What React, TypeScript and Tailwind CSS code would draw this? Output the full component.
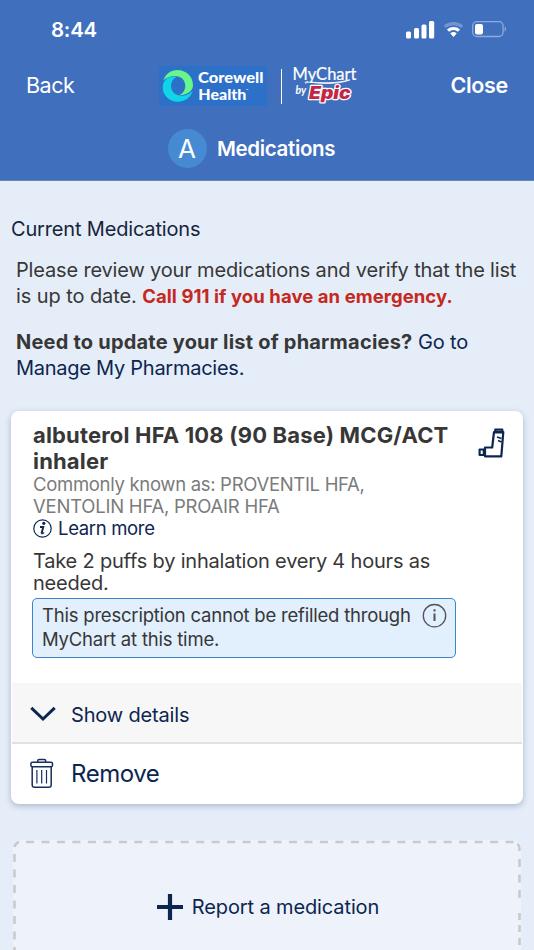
import React from "react";

function StatusIcons() {
  return (
    <svg width="102" height="20" viewBox="405 20 102 20" fill="#fff">
      <rect x="406" y="31.5" width="5" height="7" rx="1.5" />
      <rect x="414" y="28" width="5" height="10.5" rx="1.5" />
      <rect x="421.5" y="24.5" width="5" height="14" rx="1.5" />
      <rect x="429" y="21" width="5.2" height="17.5" rx="1.5" />
      <path d="M444.8 26.8a13.2 13.2 0 0 1 17.4 0" fill="none" stroke="#7496d0" strokeWidth="3.2" />
      <path d="M448 30.6a8.3 8.3 0 0 1 11 0" fill="none" stroke="#fff" strokeWidth="3.2" />
      <path d="M450.3 33.5a4.8 4.8 0 0 1 6.4 0L453.5 37z" />
      <rect x="472.7" y="21.7" width="30.4" height="14.8" rx="4.2" fill="none" stroke="#8eaadb" strokeWidth="1.3" />
      <rect x="475" y="24" width="8" height="10.5" rx="2" />
      <path d="M504.6 26.6c1.9.6 1.9 4.6 0 5.2z" fill="#8eaadb" />
    </svg>
  );
}

function CorewellLogo() {
  return (
    <svg width="108" height="40" viewBox="159 66 108 40">
      <rect x="159" y="66" width="108" height="40" fill="#2c70c8" />
      <path d="M163.3 80.5C165.500 74 171 70 177.500 70c8.500 0 15.500 6.500 15.500 15 0 5.500-4.500 10-14 10.300 4-1.700 6.300-5.400 6.300-9.300 0-6.500-4.800-10-10.300-10-5 0-8.500 1.500-11.700 4.500z" fill="#67f58c" />
      <path d="M177 76.800c-4 1.700-6 5-6 9 0 6.500 5 10 10.500 10 4.500 0 8-1.500 11.200-5-2 7-8 11-15 11-8.500 0-15-6.500-15-14.500 0-7 6-12.500 14.300-10.500z" fill="#0fd5e6" />
      <g fill="#fff" fontFamily="Lato, Inter, sans-serif" fontWeight="900" fontSize="15.5">
        <text x="198" y="83.300" textLength="65.500" lengthAdjust="spacingAndGlyphs">Corewell</text>
        <text x="198.300" y="100.200" textLength="48" lengthAdjust="spacingAndGlyphs">Health</text>
        <text x="246" y="91" fontSize="3">™</text>
      </g>
    </svg>
  );
}

function MyChartLogo() {
  return (
    <svg width="68" height="42" viewBox="291 64 68 42">
      <text x="292.500" y="80.300" fill="#fff" stroke="#fff" strokeWidth=".2" fontFamily="Lato, sans-serif" fontSize="17.500" textLength="64" lengthAdjust="spacingAndGlyphs">MyChart</text>
      <path d="M308 81.500c-4 .5-4.500 2.500 1 .6 12 .8 28 1.500 41-2.300-10 4-25 4.600-39 2.400" fill="none" stroke="#fff" strokeWidth=".9" />
      <text x="295.500" y="94.300" fill="#fff" fontFamily="Lato, sans-serif" fontSize="10.500" fontWeight="700" fontStyle="italic">by</text>
      <text x="309" y="99.300" fill="#c32748" stroke="#fff" strokeWidth="2.400" strokeLinejoin="round" paintOrder="stroke" fontFamily="Inter, sans-serif" fontSize="17" fontWeight="900" fontStyle="italic" textLength="41.500" lengthAdjust="spacingAndGlyphs">Epic</text>
    </svg>
  );
}

function InhalerIcon() {
  return (
    <svg width="27" height="31" viewBox="478 428 27 31" fill="none" stroke="#0c2650" strokeWidth="2.200">
      <path d="M494 432h9.300l-2 24.300h-16.300v-8.800h7.200z" strokeLinejoin="round" />
      <path d="M495.300 429.600h7v2.800h-7zM479.600 449.500h4.200v5.500h-4.200z" strokeLinejoin="round" />
      <path d="M497 437l4.500 1.500M498 440.500l3.500 1.500" strokeWidth="1.600" />
    </svg>
  );
}

function LearnIcon() {
  return (
    <svg width="19" height="19" viewBox="0 0 19 19">
      <circle cx="9.500" cy="9.500" r="8.700" fill="none" stroke="#0c2650" strokeWidth="1.200" />
      <circle cx="10.800" cy="4.300" r="1.600" fill="#0c2650" />
      <path d="M7 8h3.300l-1.700 6.200" fill="none" stroke="#0c2650" strokeWidth="1.900" />
      <path d="M8 14.300c.8.900 2 .4 3.200-.8" fill="none" stroke="#0c2650" strokeWidth="1.100" />
    </svg>
  );
}

function TrashIcon() {
  return (
    <svg width="24" height="31" viewBox="30 758 24 31" fill="none" stroke="#17305a" strokeWidth="1.500">
      <rect x="30.900" y="762.300" width="21.600" height="4.500" rx="1.500" />
      <path d="M37.700 762v-1q0-1.500 1.500-1.500h5q1.500 0 1.500 1.500v1M32.200 767v18q0 2.300 2.300 2.300h14.400q2.300 0 2.300-2.300v-18" />
      <path d="M36.900 770v13.500M41.700 770v13.500M46.500 770v13.500" strokeWidth="1.200" />
    </svg>
  );
}

export default function App() {
  return (
    <div className="h-[950px] w-[534px] overflow-hidden bg-[#e5edf8] font-['Inter',sans-serif] text-[#373737]">
      <header className="h-[181px] border-b border-[#6787b9] bg-[#406fbe] text-white">
        <div className="flex h-[59px] items-center justify-between pl-[51px] pr-[27px]">
          <span className="pt-[2px] text-[20.500px] font-semibold leading-none tracking-[-0.250px]">8:44</span>
          <StatusIcons />
        </div>
        <div className="flex h-[54px] items-center pl-[26px] pr-[26px]">
          <span className="w-[133px] pb-px text-[21.500px] tracking-[-0.450px]">Back</span>
          <CorewellLogo />
          <span className="ml-[14px] h-[35px] w-px bg-white" />
          <span className="mb-[2px] ml-[9px]"><MyChartLogo /></span>
          <span className="ml-auto pb-px text-[21.500px] font-semibold tracking-[-0.300px]">Close</span>
        </div>
        <div className="flex h-[67px] items-center pl-[168px] pt-[4px]">
          <span className="flex size-[39px] items-center justify-center rounded-full bg-[#458ad3] pr-px text-[26px]">A</span>
          <span className="ml-[10px] pt-[2px] text-[20.500px] font-semibold tracking-[-0.350px]">Medications</span>
        </div>
      </header>

      <main className="whitespace-nowrap">
        <h1 className="mt-[35px] pl-[11px] text-[20px] leading-[26px] tracking-[-0.170px] text-[#17243b]">Current Medications</h1>
        <div className="mt-[15px] pl-[16px] text-[20px] leading-[26px] tracking-[-0.165px]">
          <p>Please review your medications and verify that the list</p>
          <p className="tracking-[-0.090px]">is up to date. <b className="text-[18.500px] font-bold tracking-[0.070px] text-[#c52820]">Call 911 if you have an emergency.</b></p>
          <p className="mt-[20px]"><b className="font-bold tracking-[0.210px]">Need to update your list of pharmacies?</b> <a className="text-[#0c2650]">Go to</a></p>
          <p className="tracking-[-0.260px] text-[#0c2650]">Manage My Pharmacies.</p>
        </div>

        <section className="ml-[11px] mt-[30px] h-[393px] w-[512px] rounded-lg bg-white px-px shadow-[0_2px_6px_rgba(30,60,100,0.3)]">
          <div className="h-[272px] pl-[21px] pt-[11px]">
            <div className="flex justify-between pr-[17px]">
              <h2 className="text-[22px] font-bold leading-[26px] tracking-[0.170px]">albuterol HFA 108 (90 Base) MCG/ACT<br />inhaler</h2>
              <span className="mt-[6px] h-[31px]"><InhalerIcon /></span>
            </div>
            <p className="-mt-px text-[18.500px] leading-[22px] text-[#7b7b7b]">
              <span className="tracking-[-0.310px]">Commonly known as: PROVENTIL HFA,</span><br />
              <span className="tracking-[-0.230px]">VENTOLIN HFA, PROAIR HFA</span>
            </p>
            <div className="flex h-[23px] items-center gap-[6px] text-[18.500px] tracking-[-0.330px] text-[#0c2650]"><LearnIcon /><span>Learn more</span></div>
            <p className="mt-[10px] text-[20px] leading-[22px] tracking-[-0.200px]">Take 2 puffs by inhalation every 4 hours as<br />needed.</p>
            <div className="-ml-px mt-[4px] flex h-[60px] w-[424px] justify-between rounded-[5px] border border-[#3d83cd] bg-[#e2effc] pl-[9px] pr-[8px] pt-[4px] text-[18.500px] leading-[24px] tracking-[-0.210px]">
              <p>This prescription cannot be refilled through<br />MyChart at this time.</p>
              <svg width="25" height="25" viewBox="0 0 25 25" fill="none" stroke="#554f58">
                <circle cx="12.500" cy="12.700" r="11.200" strokeWidth="1.300" />
                <path d="M12.500 10.500v7.500M12.500 6.300v2.300" strokeWidth="2" />
              </svg>
            </div>
          </div>
          <div className="flex h-[61px] items-center border-b-2 border-[#e1e1e1] bg-[#f7f7f7] pl-[18px] pt-[2px] text-[20px] tracking-[-0.170px] text-[#0c2650]">
            <svg width="26" height="16" viewBox="0 0 26 16" fill="none" stroke="#0c2650" strokeWidth="3"><path d="M1.300 1.800L13 13L24.700 1.800" /></svg>
            <span className="ml-[15px] pt-[2px]">Show details</span>
          </div>
          <div className="flex h-[60px] items-center pl-[18px] text-[24px] tracking-[-0.450px] text-[#0c2650]">
            <span className="-mt-px"><TrashIcon /></span>
            <span className="ml-[17px]">Remove</span>
          </div>
        </section>

        <section className="relative ml-[13px] mt-[36px] flex h-[110px] w-[508px] items-center justify-center rounded-t-lg bg-[#edf2fb] pl-[2px] pt-[24px] text-[20px] tracking-[-0.120px] text-[#0c2650]">
          <svg className="absolute left-0 top-0" width="508" height="110" fill="none" stroke="#cacaca" strokeWidth="2.600">
            <path d="M13 2H501" strokeDasharray="8 7.470" />
            <path d="M1.500 7Q2 3.500 6 2" />
            <path d="M1.500 14V110" strokeDasharray="8 7.500" />
            <path d="M504 4.500Q506.500 4 506.500 11M506.500 19v8M506.500 34.500v8M506.500 50v8M506.500 73v7M506.500 85v7M506.500 98v7" />
          </svg>
          <svg width="26" height="26" viewBox="0 0 26 26" stroke="#0c2650" strokeWidth="4.200"><path d="M0 13H26M13 0V26" /></svg>
          <span className="ml-[9px]">Report a medication</span>
        </section>
      </main>
    </div>
  );
}
